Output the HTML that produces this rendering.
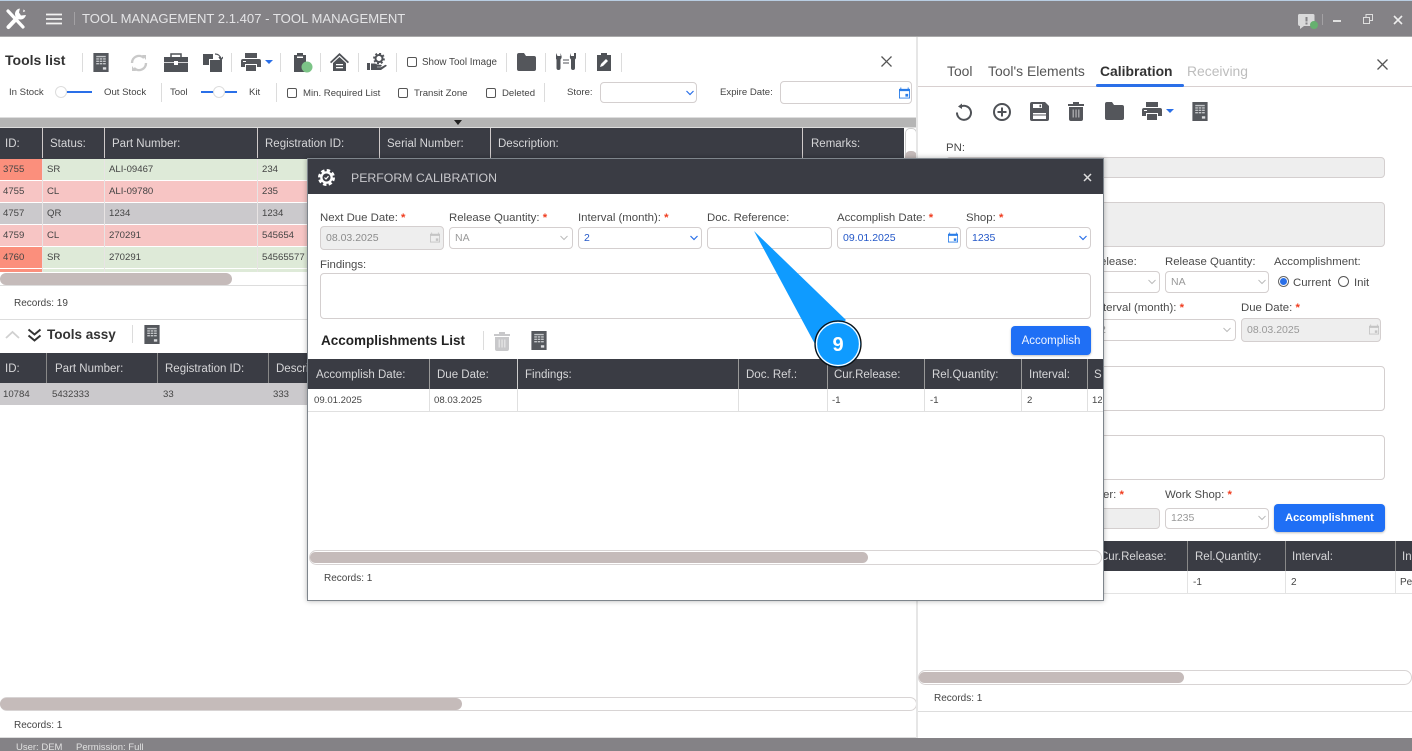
<!DOCTYPE html>
<html><head><meta charset="utf-8"><style>
html,body{margin:0;padding:0;width:1412px;height:751px;overflow:hidden;background:#fff}
body{position:relative;font-family:"Liberation Sans",sans-serif;font-size:11px;color:#444}
div,span,svg.a{position:absolute}
.t{white-space:nowrap;line-height:14px;height:14px}
.l{font-size:11.4px;color:#4a4a4a;white-space:nowrap;line-height:14px;height:14px}
.l b{color:#f03c1e;font-weight:bold;position:static}
.s{font-size:10px;color:#444;white-space:nowrap;line-height:14px;height:14px}
.n{font-size:9.6px;color:#444;white-space:nowrap;line-height:14px;height:14px}
.f{font-size:10.5px;white-space:nowrap;line-height:14px;height:14px}
.h{color:#d6d6d8;font-size:11.5px;white-space:nowrap;line-height:14px;height:14px}
.i{background:#fff;border:1px solid #d4cfcf;border-radius:4px;box-sizing:border-box}
.d{background:#eee;border:1px solid #d4cfcf;border-radius:4px;box-sizing:border-box}
.sep{width:1px;background:#dcdcdc}
.hd{background:#3a3c44}
.v{width:1px;background:#cfcaca}
.cb{width:10px;height:10px;border:1.3px solid #555;border-radius:2px;box-sizing:border-box;background:#fff}
.sb{border:1px solid #d8d4d4;border-radius:8px;background:#fff;box-sizing:border-box}
.th{background:#c5bbba;border-radius:7px}
</style></head><body>
<svg width="0" height="0" style="position:absolute">
<symbol id="xl" viewBox="0 0 16 20"><rect width="16" height="20" fill="#55585d"/><path d="M3 3h10v1.500H3zM3 5.500h2.800V7H3zM6.600 5.500h2.800V7H6.600zM10.200 5.500H13V7h-2.800zM3 8h2.800v1.500H3zM6.600 8h2.800v1.500H6.600zM10.200 8H13v1.500h-2.800zM3 10.500h2.800V12H3zM6.600 10.500h2.800V12H6.600zM10.200 10.500H13V12h-2.800z" fill="#c4c6c9"/><path d="M10 15h3.500v2.500H10z" fill="#dcdde0"/></symbol>
<symbol id="pr" viewBox="0 0 20 18"><path d="M4 0h12v5H4zM2 6h16a2 2 0 0 1 2 2v6h-4v-3H4v3H0V8a2 2 0 0 1 2-2zM5 12h10v6H5z" fill="#54565b"/><rect x="2" y="8" width="3" height="1" fill="#fff"/></symbol>
<symbol id="tr" viewBox="0 0 16 19"><path d="M5 0h6v2h5v2H0V2h5zM1 5h14v12a2 2 0 0 1-2 2H3a2 2 0 0 1-2-2z" fill="currentColor"/><path d="M4.500 7.500h1.500v8H4.500zM7.300 7.500h1.500v8H7.300zM10 7.500h1.500v8H10z" fill="#fff" opacity=".45"/></symbol>
<symbol id="fo" viewBox="0 0 19 18"><path d="M0 2a2 2 0 0 1 2-2h5l2 3h8a2 2 0 0 1 2 2v11a2 2 0 0 1-2 2H2a2 2 0 0 1-2-2z" fill="#54565b"/></symbol>
<symbol id="ca" viewBox="0 0 12 12"><path d="M2.500 0v1.500h7V0h1v1.500H12V12H0V1.500h1.500V0zM1 4v7h10V4zM7 7h3v3H7z" fill="currentColor"/></symbol>
</svg>

<!-- title bar -->
<div style="left:0;top:0;width:1412px;height:37px;background:#848286;border-top:1px solid #b8cde2;border-bottom:1px solid #aaa;box-sizing:border-box"></div>
<svg class="a" style="left:5px;top:8px" width="21" height="22" viewBox="0 0 21 22"><path d="M3 3L18 19" stroke="#fff" stroke-width="3.200" stroke-linecap="round"/><path d="M3.500 19L13 9" stroke="#fff" stroke-width="4" stroke-linecap="round"/><circle cx="15.500" cy="6" r="5.500" fill="#fff"/><path d="M15 0h4l-1 4 3-1v4l-5 .5-2-3z" fill="#848286"/></svg>
<svg class="a" style="left:46px;top:13px" width="17" height="12"><path d="M0 1.500h16M0 6h16M0 10.500h16" stroke="#f2f2f2" stroke-width="1.700"/></svg>
<div style="left:74px;top:12px;width:1px;height:13px;background:#a3a1a4"></div>
<div class="t" style="left:82px;top:11px;font-size:13.100px;line-height:16px;height:16px;color:#e4e4e6">TOOL MANAGEMENT 2.1.407 - TOOL MANAGEMENT</div>
<svg class="a" style="left:1298px;top:13px" width="23" height="17"><path d="M2 1h13a1.500 1.500 0 0 1 1.500 1.500v9a1.500 1.500 0 0 1-1.500 1.500H6l-4 3v-3a2 2 0 0 1-2-2v-8.500A1.500 1.500 0 0 1 2 1z" fill="#d9d9da"/><path d="M7.500 4h2v4.500h-2zM7.500 9.500h2v2h-2z" fill="#848286"/><circle cx="16" cy="12" r="4" fill="#66b06f"/></svg>
<div style="left:1322px;top:14px;width:1px;height:11px;background:#a3a1a4"></div>
<div style="left:1333px;top:20px;width:8px;height:2px;background:#e0e0e0"></div>
<svg class="a" style="left:1363px;top:14px" width="10" height="10"><path d="M.5 3.500h6v6h-6zM3 3.500v-3h6.500v6h-3" fill="none" stroke="#dedede"/></svg>
<svg class="a" style="left:1393px;top:15px" width="10" height="10"><path d="M1 1l8 8M9 1L1 9" stroke="#eee" stroke-width="1.600"/></svg>

<!-- left toolbar row 1 -->
<div class="t" style="left:5px;top:52px;font-size:14px;line-height:16px;height:16px;font-weight:bold;color:#333">Tools list</div>
<div class="sep" style="left:82px;top:53px;height:19px"></div>
<svg class="a" style="left:93px;top:53px" width="16" height="19"><use href="#xl"/></svg>
<svg class="a" style="left:129px;top:53px" width="20" height="20" viewBox="0 0 20 20"><path d="M3 10a7 7 0 0 1 12-5M17 10a7 7 0 0 1-12 5" fill="none" stroke="#c9c9c9" stroke-width="2.400"/><path d="M13 2l4 0 0 5zM7 18l-4 0 0-5z" fill="#c9c9c9"/></svg>
<svg class="a" style="left:164px;top:53px" width="24" height="19" viewBox="0 0 24 19"><path d="M7 4V1h10v3" fill="none" stroke="#4f5257" stroke-width="1.500"/><path d="M0 4h24v15H0z" fill="#4f5257"/><path d="M0 9.500h24" stroke="#fff" stroke-width=".7"/><rect x="10" y="8" width="4" height="4" fill="#fff"/></svg>
<svg class="a" style="left:203px;top:53px" width="20" height="19" viewBox="0 0 20 19"><path d="M0 1h10v5H6v6H0zM7 7h12v12H7z" fill="#4f5257"/><path d="M12 1c3 0 5 1 6 5M16 4l2 3 2-3" fill="none" stroke="#4f5257" stroke-width="1.300"/></svg>
<div class="sep" style="left:231px;top:53px;height:19px"></div>
<svg class="a" style="left:241px;top:53px" width="20" height="18"><use href="#pr"/></svg>
<svg class="a" style="left:265px;top:60px" width="8" height="5"><path d="M0 0h8L4 4z" fill="#2a6fe8"/></svg>
<div class="sep" style="left:280px;top:53px;height:19px"></div>
<svg class="a" style="left:292px;top:53px" width="21" height="20" viewBox="0 0 21 20"><path d="M2 2h3V0h6v2h3v17H2z" fill="#4f5257"/><rect x="5" y="3.500" width="6" height="1.500" fill="#fff"/><circle cx="15" cy="14" r="5.500" fill="#7cc487"/></svg>
<div class="sep" style="left:320px;top:53px;height:19px"></div>
<svg class="a" style="left:330px;top:53px" width="19" height="18" viewBox="0 0 19 18"><path d="M9.500 0L19 9l-1.200 1.200-8.300-7.700-8.300 7.700L0 9zM3 10l6.500-6L16 10v8H3z" fill="#4f5257"/><path d="M6 11h7v1.200H6zM6 14h7v1.200H6z" fill="#fff"/></svg>
<div class="sep" style="left:358px;top:53px;height:19px"></div>
<svg class="a" style="left:367px;top:53px" width="20" height="18" viewBox="0 0 20 18"><circle cx="12" cy="5.500" r="3.500" fill="none" stroke="#4f5257" stroke-width="2"/><circle cx="12" cy="5.500" r="5" fill="none" stroke="#4f5257" stroke-width="1.800" stroke-dasharray="2 1.900"/><path d="M0 10h3v7H0zM4 10.500h4l3 1.200h3c1 0 1 2-.5 2H10v.5h4l4.500-2.500 1.500 1-6 4.300H4z" fill="#4f5257"/></svg>
<div class="sep" style="left:396px;top:53px;height:19px"></div>
<div class="cb" style="left:407px;top:57px"></div>
<div class="n" style="left:422px;top:56px;font-size:9.800px">Show Tool Image</div>
<div class="sep" style="left:506px;top:53px;height:19px"></div>
<svg class="a" style="left:517px;top:53px" width="19" height="18"><use href="#fo"/></svg>
<div class="sep" style="left:545px;top:53px;height:19px"></div>
<svg class="a" style="left:556px;top:53px" width="20" height="18" viewBox="0 0 20 18"><path d="M0 0l1.500 3v0h3V0l1 3c.5 2-.5 3-1 3.500V15a2 2 0 0 1-4 0V6.500C0 6-.5 5 0 3zM20 0v3c.5 2-.5 3-1 3.500V15a2 2 0 0 1-4 0V6.500C14.500 6 13.500 5 14 3l1-3v3h3V0z" fill="#4f5257"/><path d="M7 7h6M7 10h6" stroke="#4f5257"/></svg>
<div class="sep" style="left:585px;top:53px;height:19px"></div>
<svg class="a" style="left:597px;top:53px" width="14" height="18" viewBox="0 0 14 18"><path d="M0 2h4V0h6v2h4v16H0z" fill="#4f5257"/><path d="M3 14l1-3 5-5 2 2-5 5z" fill="#fff"/></svg>
<div class="sep" style="left:621px;top:53px;height:19px"></div>
<svg class="a" style="left:881px;top:56px" width="11" height="11"><path d="M.5.500l10 10M10.500.500l-10 10" stroke="#555" stroke-width="1.300"/></svg>

<!-- left toolbar row 2 -->
<div class="n" style="left:9px;top:86px">In Stock</div>
<div style="left:60px;top:91px;width:32px;height:2px;background:#2a6fe8"></div>
<div style="left:55px;top:86px;width:12px;height:12px;border-radius:50%;background:#fff;border:1px solid #ddd;box-sizing:border-box"></div>
<div class="n" style="left:104px;top:86px">Out Stock</div>
<div class="sep" style="left:161px;top:83px;height:19px"></div>
<div class="n" style="left:170px;top:86px">Tool</div>
<div style="left:201px;top:91px;width:36px;height:2px;background:#2a6fe8"></div>
<div style="left:213px;top:86px;width:12px;height:12px;border-radius:50%;background:#fff;border:1px solid #ddd;box-sizing:border-box"></div>
<div class="n" style="left:249px;top:86px">Kit</div>
<div class="sep" style="left:276px;top:83px;height:19px"></div>
<div class="cb" style="left:287px;top:88px"></div>
<div class="n" style="left:303px;top:87px">Min. Required List</div>
<div class="cb" style="left:398px;top:88px"></div>
<div class="n" style="left:414px;top:87px">Transit Zone</div>
<div class="cb" style="left:486px;top:88px"></div>
<div class="n" style="left:502px;top:87px">Deleted</div>
<div class="sep" style="left:544px;top:83px;height:19px"></div>
<div class="n" style="left:567px;top:86px">Store:</div>
<div class="i" style="left:600px;top:82px;width:97px;height:21px"></div>
<svg class="a" style="left:686px;top:90px" width="8" height="6"><path d="M.5 1L4 4.500 7.500 1" fill="none" stroke="#2a6fe8" stroke-width="1.200"/></svg>
<div class="n" style="left:720px;top:86px">Expire Date:</div>
<div class="i" style="left:780px;top:81px;width:132px;height:23px"></div>
<svg class="a" style="left:899px;top:87px;color:#2a7de8" width="11" height="12"><use href="#ca"/></svg>

<div style="left:0;top:117px;width:917px;height:11px;background:#b5b5b5;border-top:1px solid #ddd;border-bottom:1px solid #ddd;box-sizing:border-box"></div>
<svg class="a" style="left:454px;top:120px" width="8" height="5"><path d="M0 0h8L4 5z" fill="#222"/></svg>

<!-- left table -->
<div class="hd" style="left:0;top:128px;width:904px;height:31px"></div>
<div class="v" style="left:42px;top:128px;height:30px"></div>
<div class="v" style="left:104px;top:128px;height:30px"></div>
<div class="v" style="left:257px;top:128px;height:30px"></div>
<div class="v" style="left:379px;top:128px;height:30px"></div>
<div class="v" style="left:490px;top:128px;height:30px"></div>
<div class="v" style="left:802px;top:128px;height:30px"></div>
<div class="h" style="left:5px;top:137px">ID:</div>
<div class="h" style="left:50px;top:137px">Status:</div>
<div class="h" style="left:112px;top:137px">Part Number:</div>
<div class="h" style="left:265px;top:137px">Registration ID:</div>
<div class="h" style="left:387px;top:137px">Serial Number:</div>
<div class="h" style="left:498px;top:137px">Description:</div>
<div class="h" style="left:811px;top:137px">Remarks:</div>
<div style="left:905px;top:128px;width:12px;height:33px;background:#fff;border:1px solid #ccc;border-radius:5px 5px 0 0;box-sizing:border-box"></div>
<div style="left:905px;top:151px;width:12px;height:9px;background:#c5bbba;border-radius:5px 5px 0 0"></div>

<div style="left:0;top:159px;width:308px;height:21px;background:#deead8"></div>
<div style="left:0;top:181px;width:308px;height:21px;background:#f7c5c4"></div>
<div style="left:0;top:203px;width:308px;height:21px;background:#cbc9cc"></div>
<div style="left:0;top:225px;width:308px;height:21px;background:#f7c5c4"></div>
<div style="left:0;top:247px;width:308px;height:21px;background:#deead8"></div>
<div style="left:0;top:269px;width:308px;height:3px;background:#deead8"></div>
<div style="left:0;top:159px;width:42px;height:21px;background:#fb8f7c"></div>
<div style="left:0;top:247px;width:42px;height:21px;background:#fb8f7c"></div>
<div style="left:0;top:269px;width:42px;height:3px;background:#fb8f7c"></div>
<div style="left:42px;top:159px;width:1px;height:113px;background:#e8e4e4"></div>
<div style="left:104px;top:159px;width:1px;height:113px;background:#e8e4e4"></div>
<div style="left:257px;top:159px;width:1px;height:113px;background:#e8e4e4"></div>

<div class="n" style="left:3px;top:163px">3755</div><div class="n" style="left:47px;top:163px">SR</div><div class="n" style="left:109px;top:163px">ALI-09467</div><div class="n" style="left:262px;top:163px">234</div>
<div class="n" style="left:3px;top:185px">4755</div><div class="n" style="left:47px;top:185px">CL</div><div class="n" style="left:109px;top:185px">ALI-09780</div><div class="n" style="left:262px;top:185px">235</div>
<div class="n" style="left:3px;top:207px">4757</div><div class="n" style="left:47px;top:207px">QR</div><div class="n" style="left:109px;top:207px">1234</div><div class="n" style="left:262px;top:207px">1234</div>
<div class="n" style="left:3px;top:229px">4759</div><div class="n" style="left:47px;top:229px">CL</div><div class="n" style="left:109px;top:229px">270291</div><div class="n" style="left:262px;top:229px">545654</div>
<div class="n" style="left:3px;top:251px">4760</div><div class="n" style="left:47px;top:251px">SR</div><div class="n" style="left:109px;top:251px">270291</div><div class="n" style="left:262px;top:251px">54565577</div>

<div style="left:0;top:273px;width:232px;height:12px;background:#c5bbba;border-radius:6px"></div>
<div style="left:0;top:285px;width:917px;height:1px;background:#ddd"></div>
<div class="s" style="left:14px;top:297px">Records: 19</div>
<div style="left:0;top:319px;width:917px;height:1px;background:#ddd"></div>

<svg class="a" style="left:5px;top:330px" width="16" height="10"><path d="M1 8l6.500-6L14 8" fill="none" stroke="#d0d0d0" stroke-width="1.800"/></svg>
<svg class="a" style="left:27px;top:328px" width="15" height="15"><path d="M1.500 1.500l6 5 6-5M1.500 7.500l6 5 6-5" fill="none" stroke="#333" stroke-width="2"/></svg>
<div class="t" style="left:47px;top:327px;font-size:13.500px;line-height:16px;height:16px;font-weight:bold;color:#333">Tools assy</div>
<div class="sep" style="left:132px;top:325px;height:18px"></div>
<svg class="a" style="left:144px;top:325px" width="16" height="19"><use href="#xl"/></svg>

<div class="hd" style="left:0;top:353px;width:308px;height:30px"></div>
<div class="v" style="left:46px;top:353px;height:30px;background:#888"></div>
<div class="v" style="left:157px;top:353px;height:30px;background:#888"></div>
<div class="v" style="left:268px;top:353px;height:30px;background:#888"></div>
<div class="h" style="left:5px;top:362px">ID:</div>
<div class="h" style="left:55px;top:362px">Part Number:</div>
<div class="h" style="left:165px;top:362px">Registration ID:</div>
<div class="h" style="left:276px;top:362px">Descri</div>
<div style="left:0;top:383px;width:308px;height:22px;background:#cbc9cc"></div>
<div class="n" style="left:3px;top:388px">10784</div><div class="n" style="left:52px;top:388px">5432333</div><div class="n" style="left:163px;top:388px">33</div><div class="n" style="left:273px;top:388px">333</div>

<div class="sb" style="left:0;top:697px;width:917px;height:14px"></div>
<div style="left:0;top:698px;width:462px;height:12px;background:#c5bbba;border-radius:6px"></div>
<div class="s" style="left:14px;top:719px">Records: 1</div>
<div style="left:0;top:737px;width:917px;height:1px;background:#ddd"></div>

<!-- right panel -->
<div style="left:916px;top:37px;width:2px;height:701px;background:#e6e6e6"></div>
<div class="t" style="left:947px;top:63px;font-size:13.900px;line-height:16px;height:16px;color:#555">Tool</div>
<div class="t" style="left:988px;top:63px;font-size:13.900px;line-height:16px;height:16px;color:#555">Tool's Elements</div>
<div class="t" style="left:1100px;top:63px;font-size:13.900px;line-height:16px;height:16px;font-weight:bold;color:#333">Calibration</div>
<div class="t" style="left:1187px;top:63px;font-size:13.900px;line-height:16px;height:16px;color:#bdbdbd">Receiving</div>
<div style="left:918px;top:86px;width:494px;height:1px;background:#d8d0d0"></div>
<div style="left:1096px;top:84px;width:88px;height:3px;background:#2a6fe8;border-radius:2px"></div>
<svg class="a" style="left:1377px;top:59px" width="11" height="11"><path d="M.5.500l10 10M10.500.500l-10 10" stroke="#555" stroke-width="1.300"/></svg>

<svg class="a" style="left:955px;top:103px" width="18" height="18" viewBox="0 0 18 18"><path d="M6 3.500A7 7 0 1 1 2 9.500" fill="none" stroke="#4f5257" stroke-width="2"/><path d="M7 .5v5.500l-4-2.500z" fill="#4f5257"/></svg>
<svg class="a" style="left:993px;top:103px" width="18" height="18"><circle cx="9" cy="9" r="8" fill="none" stroke="#4f5257" stroke-width="2"/><path d="M9 4.500v9M4.500 9h9" stroke="#4f5257" stroke-width="2"/></svg>
<svg class="a" style="left:1030px;top:102px" width="19" height="19" viewBox="0 0 19 19"><path d="M2 0h13l4 4v13a2 2 0 0 1-2 2H2a2 2 0 0 1-2-2V2a2 2 0 0 1 2-2z" fill="#54565b"/><path d="M3 2h9v4H3zM3 11h13v6H3z" fill="#fff"/><path d="M9.500 2.800h1.600v2.400H9.500zM3 12.500h13v1H3z" fill="#54565b"/></svg>
<svg class="a" style="left:1068px;top:102px;color:#54565b" width="16" height="19"><use href="#tr"/></svg>
<svg class="a" style="left:1105px;top:102px" width="19" height="18"><use href="#fo"/></svg>
<svg class="a" style="left:1142px;top:102px" width="20" height="18"><use href="#pr"/></svg>
<svg class="a" style="left:1166px;top:109px" width="8" height="5"><path d="M0 0h8L4 4z" fill="#2a6fe8"/></svg>
<svg class="a" style="left:1192px;top:102px" width="16" height="19"><use href="#xl"/></svg>

<div class="l" style="left:946px;top:141px">PN:</div>
<div class="d" style="left:946px;top:157px;width:439px;height:21px"></div>
<div class="d" style="left:946px;top:202px;width:439px;height:45px"></div>
<div class="l" style="left:1100px;top:255px">elease:</div>
<div class="l" style="left:1165px;top:255px">Release Quantity:</div>
<div class="l" style="left:1274px;top:255px">Accomplishment:</div>
<div class="i" style="left:1100px;top:271px;width:60px;height:22px"></div>
<svg class="a" style="left:1148px;top:279px" width="8" height="6"><path d="M.5 1L4 4.500 7.500 1" fill="none" stroke="#bbb"/></svg>
<div class="i" style="left:1165px;top:271px;width:104px;height:22px"></div>
<div class="f" style="left:1171px;top:275px;color:#999">NA</div>
<svg class="a" style="left:1258px;top:279px" width="8" height="6"><path d="M.5 1L4 4.500 7.500 1" fill="none" stroke="#bbb"/></svg>
<div style="left:1278px;top:276px;width:11px;height:11px;border:1px solid #666;border-radius:50%;box-sizing:border-box"></div>
<div style="left:1280px;top:278px;width:7px;height:7px;border-radius:50%;background:#2a6fe8"></div>
<div class="l" style="left:1293px;top:276px">Current</div>
<div style="left:1338px;top:276px;width:11px;height:11px;border:1.300px solid #555;border-radius:50%;box-sizing:border-box"></div>
<div class="l" style="left:1354px;top:276px">Init</div>

<div class="l" style="left:1103px;top:301px">terval (month): <b>*</b></div>
<div class="l" style="left:1241px;top:301px">Due Date: <b>*</b></div>
<div class="i" style="left:1100px;top:319px;width:136px;height:22px"></div>
<div class="f" style="left:1100px;top:323px;color:#999">2</div>
<svg class="a" style="left:1223px;top:327px" width="8" height="6"><path d="M.5 1L4 4.500 7.500 1" fill="none" stroke="#bbb"/></svg>
<div class="d" style="left:1241px;top:318px;width:140px;height:24px"></div>
<div class="f" style="left:1247px;top:323px;color:#999">08.03.2025</div>
<svg class="a" style="left:1369px;top:324px;color:#c4c4c4" width="10" height="11"><use href="#ca"/></svg>
<div class="i" style="left:1100px;top:366px;width:285px;height:45px"></div>
<div class="i" style="left:1100px;top:435px;width:285px;height:45px"></div>
<div class="l" style="left:1103px;top:488px">er: <b>*</b></div>
<div class="l" style="left:1165px;top:488px">Work Shop: <b>*</b></div>
<div class="d" style="left:1100px;top:508px;width:60px;height:21px"></div>
<div class="i" style="left:1165px;top:508px;width:104px;height:21px"></div>
<div class="f" style="left:1171px;top:511px;color:#999">1235</div>
<svg class="a" style="left:1258px;top:515px" width="8" height="6"><path d="M.5 1L4 4.500 7.500 1" fill="none" stroke="#bbb"/></svg>
<div style="left:1274px;top:504px;width:111px;height:28px;background:#1f6ff5;border-radius:4px;box-shadow:0 1px 2px rgba(0,0,0,.25);color:#fff;font-size:11px;font-weight:bold;text-align:center;line-height:28px">Accomplishment</div>
<div class="hd" style="left:1103px;top:541px;width:309px;height:30px"></div>
<div class="v" style="left:1187px;top:541px;height:30px;background:#888"></div>
<div class="v" style="left:1285px;top:541px;height:30px;background:#888"></div>
<div class="v" style="left:1395px;top:541px;height:30px;background:#888"></div>
<div class="h" style="left:1100px;top:550px;z-index:0">Cur.Release:</div>
<div class="h" style="left:1195px;top:550px">Rel.Quantity:</div>
<div class="h" style="left:1292px;top:550px">Interval:</div>
<div class="h" style="left:1402px;top:550px">In</div>
<div style="left:1103px;top:593px;width:309px;height:1px;background:#e3e3e3"></div>
<div class="v" style="left:1187px;top:571px;height:22px;background:#e3e3e3"></div>
<div class="v" style="left:1285px;top:571px;height:22px;background:#e3e3e3"></div>
<div class="v" style="left:1395px;top:571px;height:22px;background:#e3e3e3"></div>
<div class="s" style="left:1193px;top:576px">-1</div>
<div class="s" style="left:1291px;top:576px">2</div>
<div class="s" style="left:1400px;top:576px">Per</div>
<div class="sb" style="left:918px;top:670px;width:494px;height:15px"></div>
<div style="left:919px;top:672px;width:265px;height:11px;background:#c5bbba;border-radius:6px"></div>
<div class="s" style="left:934px;top:692px">Records: 1</div>
<div style="left:918px;top:711px;width:494px;height:1px;background:#ddd"></div>

<!-- status bar -->
<div style="left:0;top:738px;width:1412px;height:13px;background:#848286"></div>
<div class="t" style="left:16px;top:741px;font-size:9.500px;color:#e0e0e0">User: DEM</div>
<div class="t" style="left:76px;top:741px;font-size:9.500px;color:#e0e0e0">Permission: Full</div>

<!-- modal -->
<div style="left:307px;top:158px;width:797px;height:443px;background:#fff;border:1px solid #7e858c;box-sizing:border-box;box-shadow:0 0 5px rgba(0,0,0,.3)"></div>
<div class="hd" style="left:308px;top:159px;width:795px;height:35px"></div>
<svg class="a" style="left:318px;top:169px" width="17" height="17" viewBox="0 0 17 17"><circle cx="8.500" cy="8.500" r="6.300" fill="#fff"/><circle cx="8.500" cy="8.500" r="7" fill="none" stroke="#fff" stroke-width="3" stroke-dasharray="3.300 2.200"/><circle cx="8.500" cy="8.500" r="4" fill="#3a3c44"/><path d="M6.500 8.500l1.500 1.500 2.500-2.800" fill="none" stroke="#fff" stroke-width="1.200"/></svg>
<div class="t" style="left:351px;top:171px;font-size:12.300px;line-height:15px;height:15px;color:#c8c8cc">PERFORM CALIBRATION</div>
<svg class="a" style="left:1083px;top:173px" width="9" height="9"><path d="M1 1l7 7M8 1L1 8" stroke="#ddd" stroke-width="1.500"/></svg>

<div class="l" style="left:320px;top:211px">Next Due Date: <b>*</b></div>
<div class="l" style="left:449px;top:211px">Release Quantity: <b>*</b></div>
<div class="l" style="left:578px;top:211px">Interval (month): <b>*</b></div>
<div class="l" style="left:707px;top:211px">Doc. Reference:</div>
<div class="l" style="left:837px;top:211px">Accomplish Date: <b>*</b></div>
<div class="l" style="left:966px;top:211px">Shop: <b>*</b></div>

<div class="d" style="left:320px;top:226px;width:124px;height:24px"></div>
<div class="f" style="left:326px;top:231px;color:#8c8c8c">08.03.2025</div>
<svg class="a" style="left:430px;top:232px;color:#c4c4c4" width="10" height="11"><use href="#ca"/></svg>
<div class="i" style="left:449px;top:227px;width:124px;height:22px"></div>
<div class="f" style="left:455px;top:231px;color:#999">NA</div>
<svg class="a" style="left:560px;top:235px" width="8" height="6"><path d="M.5 1L4 4.500 7.500 1" fill="none" stroke="#bbb"/></svg>
<div class="i" style="left:578px;top:227px;width:124px;height:22px"></div>
<div class="f" style="left:584px;top:231px;color:#2458c8">2</div>
<svg class="a" style="left:690px;top:235px" width="8" height="6"><path d="M.5 1L4 4.500 7.500 1" fill="none" stroke="#2a6fe8" stroke-width="1.200"/></svg>
<div class="i" style="left:707px;top:227px;width:125px;height:22px"></div>
<div class="i" style="left:837px;top:227px;width:124px;height:22px"></div>
<div class="f" style="left:843px;top:231px;color:#2458c8">09.01.2025</div>
<svg class="a" style="left:948px;top:232px;color:#2a7de8" width="10" height="11"><use href="#ca"/></svg>
<div class="i" style="left:966px;top:227px;width:125px;height:22px"></div>
<div class="f" style="left:972px;top:231px;color:#2458c8">1235</div>
<svg class="a" style="left:1079px;top:235px" width="8" height="6"><path d="M.5 1L4 4.500 7.500 1" fill="none" stroke="#2a6fe8" stroke-width="1.200"/></svg>

<div class="l" style="left:320px;top:258px">Findings:</div>
<div class="i" style="left:320px;top:273px;width:771px;height:46px"></div>
<div class="t" style="left:321px;top:333px;font-size:13.500px;line-height:16px;height:16px;font-weight:bold;color:#222">Accomplishments List</div>
<div class="sep" style="left:483px;top:331px;height:19px"></div>
<svg class="a" style="left:494px;top:332px;color:#c8c8ca" width="16" height="19"><use href="#tr"/></svg>
<svg class="a" style="left:531px;top:331px" width="16" height="19"><use href="#xl"/></svg>
<div style="left:1011px;top:326px;width:80px;height:29px;background:#1f6ff5;border-radius:4px;box-shadow:0 1px 2px rgba(0,0,0,.25);color:#f0f5ff;font-size:11.500px;text-align:center;line-height:30px">Accomplish</div>

<div class="hd" style="left:308px;top:359px;width:795px;height:30px"></div>
<div class="v" style="left:429px;top:359px;height:30px;background:#999"></div>
<div class="v" style="left:517px;top:359px;height:30px;background:#ccc"></div>
<div class="v" style="left:738px;top:359px;height:30px;background:#999"></div>
<div class="v" style="left:827px;top:359px;height:30px;background:#999"></div>
<div class="v" style="left:924px;top:359px;height:30px;background:#999"></div>
<div class="v" style="left:1021px;top:359px;height:30px;background:#999"></div>
<div class="v" style="left:1087px;top:359px;height:30px;background:#999"></div>
<div class="h" style="left:316px;top:368px">Accomplish Date:</div>
<div class="h" style="left:437px;top:368px">Due Date:</div>
<div class="h" style="left:525px;top:368px">Findings:</div>
<div class="h" style="left:746px;top:368px">Doc. Ref.:</div>
<div class="h" style="left:834px;top:368px">Cur.Release:</div>
<div class="h" style="left:932px;top:368px">Rel.Quantity:</div>
<div class="h" style="left:1029px;top:368px">Interval:</div>
<div class="h" style="left:1094px;top:368px;width:8px;overflow:hidden">Shop</div>
<div style="left:308px;top:411px;width:795px;height:1px;background:#e0e0e0"></div>
<div class="v" style="left:429px;top:389px;height:22px;background:#e0e0e0"></div>
<div class="v" style="left:517px;top:389px;height:22px;background:#e0e0e0"></div>
<div class="v" style="left:738px;top:389px;height:22px;background:#e0e0e0"></div>
<div class="v" style="left:827px;top:389px;height:22px;background:#e0e0e0"></div>
<div class="v" style="left:924px;top:389px;height:22px;background:#e0e0e0"></div>
<div class="v" style="left:1021px;top:389px;height:22px;background:#e0e0e0"></div>
<div class="v" style="left:1087px;top:389px;height:22px;background:#e0e0e0"></div>
<div class="n" style="left:314px;top:394px">09.01.2025</div>
<div class="n" style="left:434px;top:394px">08.03.2025</div>
<div class="n" style="left:832px;top:394px">-1</div>
<div class="n" style="left:930px;top:394px">-1</div>
<div class="n" style="left:1027px;top:394px">2</div>
<div class="n" style="left:1092px;top:394px;width:10px;overflow:hidden">1235</div>
<div class="sb" style="left:309px;top:550px;width:793px;height:15px"></div>
<div style="left:310px;top:552px;width:558px;height:11px;background:#c5bbba;border-radius:6px"></div>
<div class="s" style="left:324px;top:572px">Records: 1</div>

<!-- callout -->
<svg class="a" style="left:740px;top:220px" width="130" height="155" viewBox="740 220 130 155"><path d="M754 231L846 320 816 346z" fill="#0f9bff"/><circle cx="838" cy="344" r="23" fill="#0f9bff" stroke="#111" stroke-width="1.300"/><circle cx="838" cy="344" r="21.500" fill="none" stroke="#fff" stroke-width="1.300"/><text x="838" y="351" text-anchor="middle" font-family="Liberation Sans,sans-serif" font-size="20" font-weight="bold" fill="#fff">9</text></svg>
</body></html>
